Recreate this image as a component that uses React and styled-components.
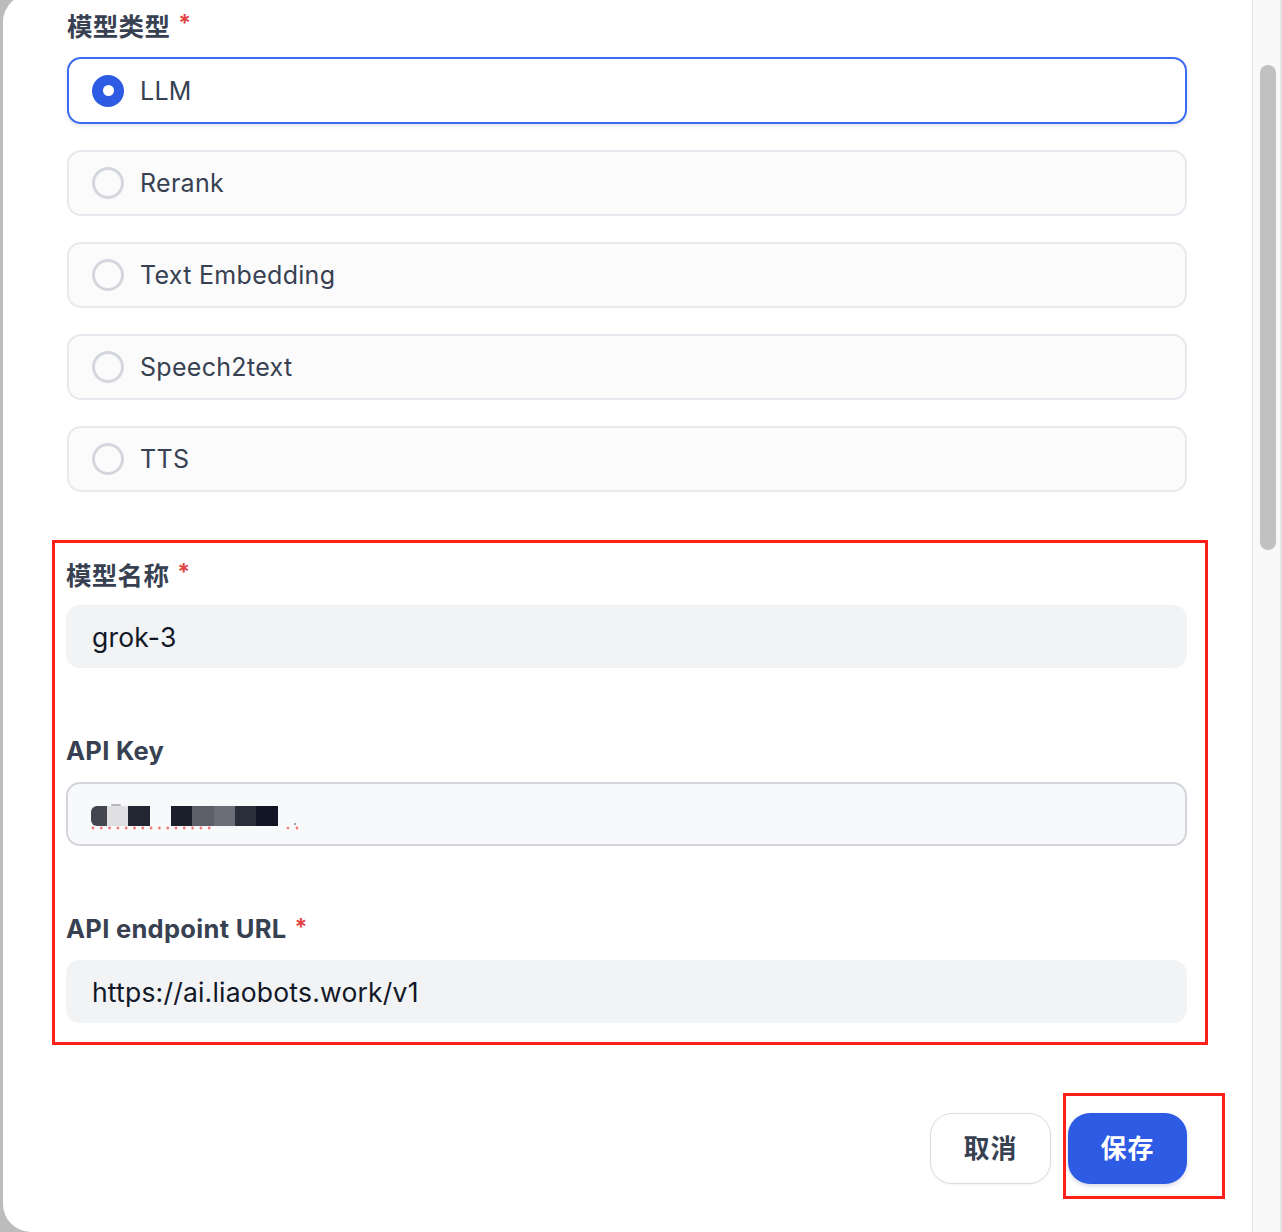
import React from "react";
import styled, { createGlobalStyle } from "styled-components";

const Global = createGlobalStyle`
  html, body { margin: 0; padding: 0; background: #bcbcbc; }
  body { font-family: "Inter", "Noto Sans CJK SC", sans-serif; overflow: hidden; }
  * { box-sizing: border-box; }
`;

const Page = styled.div`
  display: flex;
  height: 1232px;
  padding-left: 3px;
  overflow: hidden;
`;

const Panel = styled.div`
  flex: 1;
  display: flex;
  height: 1238px;
  margin-top: -6px;
  background: #ffffff;
  border-radius: 28px 0 0 28px;
  overflow: hidden;
`;

const Content = styled.div`
  width: 1249px;
  padding: 14px 65px 0 64px;
  display: flex;
  flex-direction: column;
`;

const ScrollTrack = styled.div`
  width: 30px;
  background: #f9f9f9;
  border-left: 1px solid #e6e6e6;
  border-right: 2px solid #e6e6e6;
  padding: 71px 0 0 7px;
`;

const ScrollThumb = styled.div`
  width: 16px;
  height: 485px;
  border-radius: 8px;
  background: #c1c1c1;
`;

const Label = styled.div`
  display: flex;
  align-items: center;
  gap: 8px;
  height: 32px;
  font-size: 25.5px;
  font-weight: 700;
  color: #374151;
  letter-spacing: 0.3px;
`;

const Star = styled.span`
  color: #e04444;
  font-size: 23px;
  font-weight: 700;
  line-height: 1;
  align-self: flex-start;
  margin-top: 4px;
`;

const OptionList = styled.div`
  display: flex;
  flex-direction: column;
  gap: 26px;
  margin-top: 17px;
`;

const Option = styled.div`
  height: ${(p) => (p.$active ? 67 : 66)}px;
  display: flex;
  align-items: center;
  gap: 16px;
  padding-left: 23px;
  border-radius: 14px;
  border: 2px solid ${(p) => (p.$active ? "#3b6cf0" : "#e8e9ee")};
  background: ${(p) => (p.$active ? "#ffffff" : "#fbfbfc")};
  box-shadow: ${(p) => (p.$active ? "0 2px 4px rgba(30, 40, 80, 0.12)" : "none")};
  font-size: 25px;
  color: #374151;
  letter-spacing: 0.3px;
`;

const Radio = styled.span`
  width: 32px;
  height: 32px;
  border-radius: 50%;
  flex-shrink: 0;
  display: flex;
  align-items: center;
  justify-content: center;
  border: ${(p) => (p.$checked ? "none" : "3px solid #d3d6dc")};
  background: ${(p) => (p.$checked ? "#2d5be3" : "transparent")};
  &::after {
    content: "";
    display: ${(p) => (p.$checked ? "block" : "none")};
    width: 11px;
    height: 11px;
    border-radius: 50%;
    background: #ffffff;
  }
`;

const Annotated = styled.div`
  margin: 48px -21px 0 -15px;
  border: 3px solid #ff1f1a;
  padding: 14px 18px 19px 11px;
  display: flex;
  flex-direction: column;
`;

const Field = styled.div`
  display: flex;
  flex-direction: column;
  gap: 16px;
  & + & {
    margin-top: 66px;
  }
`;

const Input = styled.div`
  height: ${(p) => (p.$bordered ? 64 : 63)}px;
  display: flex;
  align-items: center;
  padding-left: ${(p) => (p.$bordered ? 23 : 26)}px;
  border-radius: 14px;
  background: ${(p) => (p.$bordered ? "#f8f9fb" : "#f2f3f5")};
  border: ${(p) => (p.$bordered ? "2px solid #d3d5db" : "none")};
  font-size: 26.5px;
  color: #111827;
  letter-spacing: 0.2px;
`;

const MaskSvg = styled.svg`
  display: block;
  margin-top: 10px;
`;

const Footer = styled.div`
  display: flex;
  justify-content: flex-end;
  gap: 17px;
  margin-top: 68px;
`;

const Button = styled.button`
  position: relative;
  height: 71px;
  width: ${(p) => (p.$primary ? 119 : 121)}px;
  border-radius: 22px;
  font-family: inherit;
  font-size: 26px;
  font-weight: 700;
  letter-spacing: 1px;
  padding: 0 0 4px;
  cursor: pointer;
  border: ${(p) => (p.$primary ? "none" : "1px solid #dcdcdf")};
  background: ${(p) => (p.$primary ? "#2d5be3" : "#ffffff")};
  color: ${(p) => (p.$primary ? "#ffffff" : "#374151")};
  box-shadow: ${(p) => (p.$primary ? "0 2px 4px rgba(30, 50, 120, 0.18)" : "0 1px 2px rgba(0,0,0,0.05)")};
`;

const Highlight = styled.span`
  position: absolute;
  left: -5px;
  top: -20px;
  right: -38px;
  bottom: -15px;
  border: 3px solid #ff1f1a;
  pointer-events: none;
`;

const options = ["LLM", "Rerank", "Text Embedding", "Speech2text", "TTS"];

function MaskedKey() {
  const blocks = [
    [16, 21, "#e0e0e2"],
    [37, 22, "#222633"],
    [80, 21, "#1b1f2c"],
    [101, 22, "#5c5f69"],
    [123, 21, "#6b6d77"],
    [144, 21, "#2a2e3b"],
    [165, 22, "#121624"],
  ];
  const dots = [];
  for (let x = 2; x < 125; x += 8.3) dots.push(x);
  return (
    <MaskSvg width="220" height="30" viewBox="0 0 220 30">
      <path d="M6 2 H16 V22 H6 A6 6 0 0 1 0 16 V8 A6 6 0 0 1 6 2 Z" fill="#44464f" />
      {blocks.map(([x, w, c]) => (
        <rect key={x} x={x} y="2" width={w} height="20" fill={c} />
      ))}
      <rect x="20" y="0" width="10" height="2" rx="1" fill="#b8b9bd" />
      {dots.map((x) => (
        <circle key={x} cx={x} cy="24" r="1.4" fill="#f07a78" />
      ))}
      <circle cx="197" cy="24" r="1.3" fill="#f07a78" />
      <circle cx="206" cy="24" r="1.4" fill="#f07a78" />
      <circle cx="204" cy="20" r="0.8" fill="#333" />
    </MaskSvg>
  );
}

export default function App() {
  return (
    <>
      <Global />
      <Page>
        <Panel>
          <Content>
            <Label>
              模型类型<Star>*</Star>
            </Label>
            <OptionList>
              {options.map((o, i) => (
                <Option key={o} $active={i === 0}>
                  <Radio $checked={i === 0} />
                  {o}
                </Option>
              ))}
            </OptionList>

            <Annotated>
              <Field>
                <Label>
                  模型名称<Star>*</Star>
                </Label>
                <Input>grok-3</Input>
              </Field>
              <Field>
                <Label>API Key</Label>
                <Input $bordered>
                  <MaskedKey />
                </Input>
              </Field>
              <Field>
                <Label>
                  API endpoint URL<Star>*</Star>
                </Label>
                <Input>https://ai.liaobots.work/v1</Input>
              </Field>
            </Annotated>

            <Footer>
              <Button>取消</Button>
              <Button $primary>
                保存
                <Highlight />
              </Button>
            </Footer>
          </Content>
          <ScrollTrack>
            <ScrollThumb />
          </ScrollTrack>
        </Panel>
      </Page>
    </>
  );
}
